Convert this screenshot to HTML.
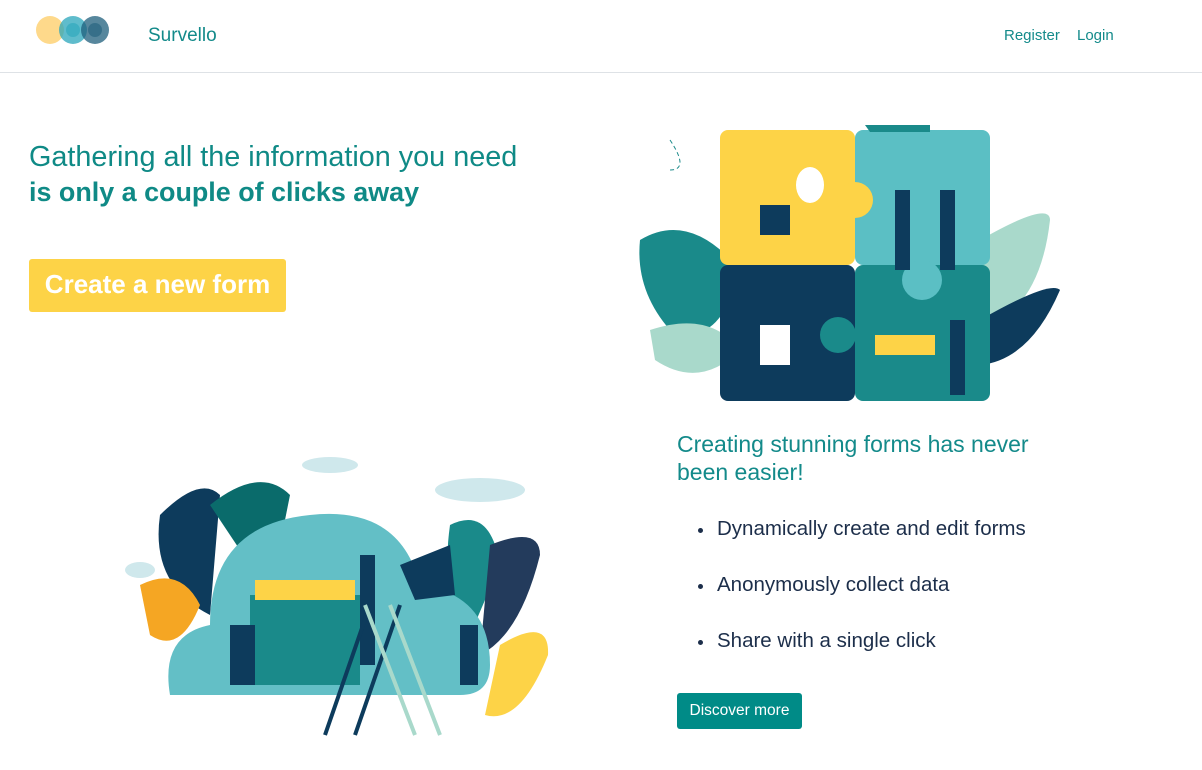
<!DOCTYPE html>
<html><head><meta charset="utf-8"><style>
*{margin:0;padding:0;box-sizing:border-box}
body{width:1202px;height:770px;overflow:hidden;background:#fff;font-family:"Liberation Sans",sans-serif;position:relative}
.nav{position:absolute;left:0;top:0;width:1202px;height:73px;border-bottom:1px solid #dee2e6}
.brand{position:absolute;left:148px;top:25px;font-size:19px;color:#138a8a}
.links{position:absolute;top:27px;font-size:15px;color:#138a8a}
h1{position:absolute;left:29px;top:139px;line-height:33px;color:#0f8a86;font-weight:normal}
h1 span{font-size:28.8px}
h1 b{font-weight:bold;font-size:26.9px}
.btn1{position:absolute;left:29px;top:259px;width:257px;height:53px;background:#fdd347;border-radius:3px;color:#fff;font-size:26px;font-weight:bold;line-height:50px;text-align:center}
h2{position:absolute;left:677px;top:430px;font-size:23px;line-height:28px;color:#138a8a;font-weight:normal;width:385px}
ul{position:absolute;left:717px;top:517px;color:#1c2e4a;font-size:20.5px;list-style:none}
li{position:relative;height:56px}
li:before{content:"";position:absolute;left:-19px;top:11px;width:5px;height:5px;border-radius:50%;background:#1c2e4a}
.btn2{position:absolute;left:677px;top:693px;width:125px;height:36px;background:#008b87;border-radius:3px;color:#fff;font-size:15.5px;line-height:36px;text-align:center}
svg{position:absolute}
</style></head><body>
<div class="nav">
<svg style="left:36px;top:14px" width="76" height="32"><circle cx="14" cy="16" r="14" fill="#fdc95a" opacity=".7"/><circle cx="37" cy="16" r="14" fill="#2aa6bb" opacity=".75"/><circle cx="59" cy="16" r="14" fill="#1f5f7c" opacity=".75"/><circle cx="37" cy="16" r="7" fill="#2aa6bb" opacity=".6"/><circle cx="59" cy="16" r="7" fill="#1f5f7c" opacity=".6"/></svg>
<div class="brand">Survello</div>
<div class="links" style="left:1004px">Register</div>
<div class="links" style="left:1077px">Login</div>
</div>
<h1><span>Gathering all the information you need</span><br><b>is only a couple of clicks away</b></h1>
<div class="btn1">Create a new form</div>

<svg style="left:630px;top:90px" width="440" height="320">
<path d="M10 150 Q60 120 110 180 Q90 260 40 240 Q5 200 10 150Z" fill="#1a8a8a"/>
<path d="M20 240 Q80 220 110 260 Q70 300 25 270Z" fill="#a9d9cb"/>
<path d="M350 150 Q420 110 420 130 Q410 220 350 240Z" fill="#a9d9cb"/>
<path d="M350 230 Q420 190 430 200 Q400 270 350 275Z" fill="#0d3b5c"/>
<path d="M40 50 Q60 80 40 80" stroke="#1a8a8a" fill="none" stroke-dasharray="4 3"/>
<rect x="90" y="40" width="135" height="135" rx="8" fill="#fdd347"/>
<rect x="225" y="40" width="135" height="135" rx="8" fill="#5bbfc4"/>
<rect x="90" y="175" width="135" height="136" rx="8" fill="#0d3b5c"/>
<rect x="225" y="175" width="135" height="136" rx="8" fill="#1a8a8a"/>
<circle cx="225" cy="110" r="18" fill="#fdd347"/><circle cx="292" cy="190" r="20" fill="#5bbfc4"/><circle cx="208" cy="245" r="18" fill="#1a8a8a"/>
<ellipse cx="180" cy="95" rx="14" ry="18" fill="#fff"/>
<rect x="130" y="115" width="30" height="30" fill="#0d3b5c"/><rect x="265" y="100" width="15" height="80" fill="#0d3b5c"/><rect x="310" y="100" width="15" height="80" fill="#0d3b5c"/>
<rect x="130" y="235" width="30" height="40" fill="#fff"/><rect x="245" y="245" width="60" height="20" fill="#fdd347"/><rect x="320" y="230" width="15" height="75" fill="#0d3b5c"/>
<path d="M235 35 L300 35 L300 42 L240 42Z" fill="#1a8a8a"/>
</svg>

<svg style="left:120px;top:435px" width="440" height="310">
<path d="M40 80 Q80 40 100 60 L90 180 Q30 150 40 80Z" fill="#0d3b5c"/>
<path d="M20 150 Q60 130 80 170 Q60 220 30 200Z" fill="#f5a623"/>
<path d="M90 70 Q140 30 170 60 L150 160Z" fill="#0a6b6b"/>
<path d="M330 90 Q370 70 380 130 L350 200 Q320 160 330 90Z" fill="#1a8a8a"/>
<path d="M370 110 Q420 90 420 120 Q400 200 360 220Z" fill="#233b5c"/>
<path d="M380 210 Q430 180 428 220 Q400 290 365 280Z" fill="#fdd347"/>
<path d="M50 260 Q40 200 90 190 Q90 90 190 80 Q280 70 300 150 Q370 160 370 230 Q370 260 340 260Z" fill="#63bfc6"/>
<rect x="130" y="160" width="110" height="90" fill="#1a8a8a"/>
<rect x="135" y="145" width="100" height="20" fill="#fdd347"/>
<rect x="240" y="120" width="15" height="110" fill="#0d3b5c"/>
<path d="M205 300 L250 170 M235 300 L280 170" stroke="#0d3b5c" stroke-width="4"/>
<path d="M270 170 L320 300 M245 170 L295 300" stroke="#a9d9cb" stroke-width="4"/>
<path d="M280 130 L330 110 L335 160 L295 165Z" fill="#0d3b5c"/>
<rect x="110" y="190" width="25" height="60" fill="#0d3b5c"/><rect x="340" y="190" width="18" height="60" fill="#0d3b5c"/>
<ellipse cx="210" cy="30" rx="28" ry="8" fill="#cfe8ec"/><ellipse cx="360" cy="55" rx="45" ry="12" fill="#cfe8ec"/><ellipse cx="20" cy="135" rx="15" ry="8" fill="#cfe8ec"/>
</svg>

<h2>Creating stunning forms has never been easier!</h2>
<ul><li>Dynamically create and edit forms</li><li>Anonymously collect data</li><li>Share with a single click</li></ul>
<div class="btn2">Discover more</div>
</body></html>
